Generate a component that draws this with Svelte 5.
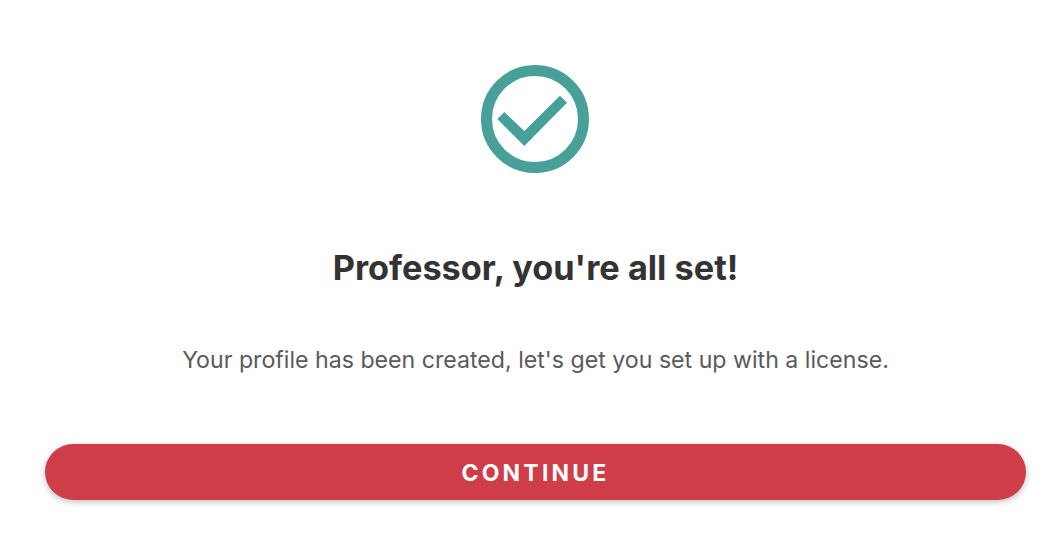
<script>
  let title = "Professor, you're all set!";
  let message = "Your profile has been created, let's get you set up with a license.";
</script>

<div class="page">
  <svg class="check" width="108" height="108" viewBox="0 0 108 108" aria-hidden="true">
    <circle cx="54" cy="54" r="48.5" fill="none" stroke="#48a198" stroke-width="11" />
    <polygon points="23.3,47 16.3,54 43.3,81 86,37.7 79,30.7 43.3,66" fill="#48a198" />
  </svg>
  <h1 class="title">{title}</h1>
  <p class="message">{message}</p>
  <button class="button">CONTINUE</button>
</div>

<style>
  :global(body) {
    margin: 0;
    background: #fff;
  }

  .page {
    display: flex;
    flex-direction: column;
    align-items: center;
    height: 540px;
    padding: 65px 30px 0 45px;
    box-sizing: border-box;
    font-family: "Inter", "Liberation Sans", sans-serif;
  }

  .check {
    display: block;
    margin-right: 1px;
  }

  .title {
    margin: 70px 0 0;
    font-size: 34.3px;
    line-height: 50px;
    font-weight: 700;
    color: #333;
  }

  .message {
    margin: 51px 0 0;
    font-size: 23.15px;
    line-height: 32px;
    font-weight: 400;
    color: #5a5a5a;
  }

  .button {
    width: 100%;
    height: 56px;
    margin-top: 67.5px;
    padding: 2px 0 0;
    border: none;
    border-radius: 28px;
    background: #cf3d49;
    color: #fff;
    font-family: inherit;
    font-size: 23px;
    font-weight: 700;
    letter-spacing: 3.2px;
    box-shadow: 0 2px 6px rgba(0, 0, 0, 0.25);
  }
</style>
